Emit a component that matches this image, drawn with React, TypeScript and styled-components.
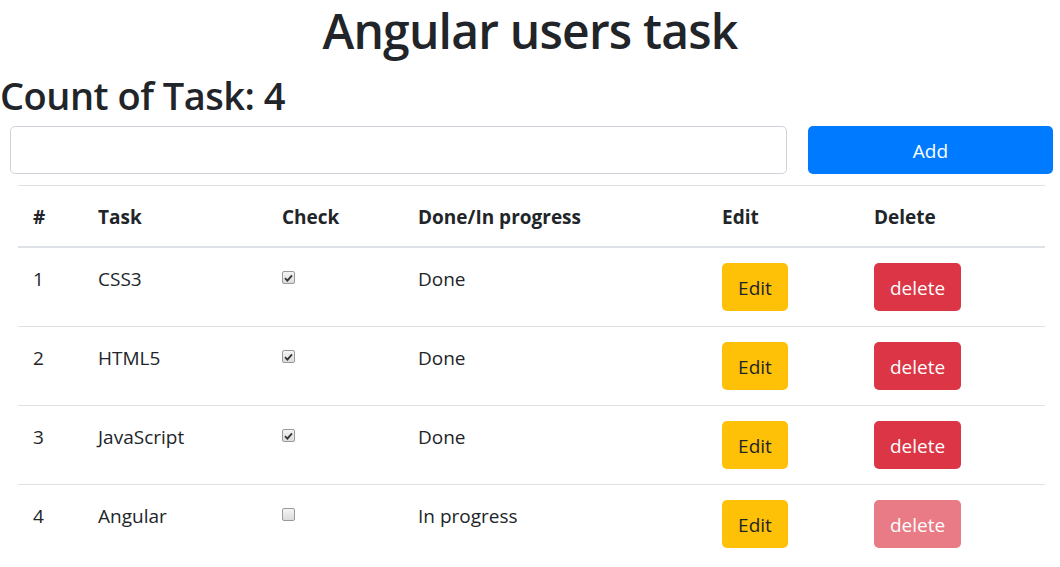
import React from "react";
import styled, { createGlobalStyle, css } from "styled-components";

const Global = createGlobalStyle`
  html, body { margin: 0; padding: 0; background: #fff; }
  body {
    font-family: "Open Sans", "Noto Sans", Arial, sans-serif;
    font-size: 20px;
    line-height: 30px;
    color: #212529;
  }
  * { box-sizing: border-box; }
`;

const Page = styled.div`
  width: 1060px;
  display: flex;
  flex-direction: column;
`;

const Title = styled.h1`
  margin: 0 0 10px;
  padding-top: 1px;
  font-size: 48px;
  font-weight: 600;
  line-height: 60px;
  text-align: center;
  letter-spacing: -0.8px;
`;

const Count = styled.h2`
  margin: 0 0 7px;
  font-size: 38px;
  font-weight: 600;
  line-height: 48px;
  letter-spacing: -0.5px;
`;

const FormRow = styled.div`
  display: flex;
  gap: 21px;
  padding: 0 7px 0 10px;
`;

const TextInput = styled.input`
  flex: 1;
  height: 48px;
  border: 1px solid #ced4da;
  border-radius: 5px;
  padding: 0 15px;
  font: inherit;
  outline: none;
`;

const Button = styled.button<{ $variant: "primary" | "warning" | "danger"; $disabled?: boolean }>`
  border: 1px solid transparent;
  border-radius: 5px;
  height: 48px;
  padding: 0 16px;
  font-family: inherit;
  font-size: 19px;
  line-height: 30px;
  cursor: pointer;
  ${(p) =>
    p.$variant === "primary" &&
    css`
      background: #007bff;
      color: #fff;
    `}
  ${(p) =>
    p.$variant === "warning" &&
    css`
      background: #ffc107;
      color: #212529;
    `}
  ${(p) =>
    p.$variant === "danger" &&
    css`
      background: #dc3545;
      color: #fff;
    `}
  ${(p) =>
    p.$disabled &&
    css`
      opacity: 0.65;
      cursor: default;
    `}
`;

const AddButton = styled(Button)`
  width: 245px;
  padding-top: 2px;
`;

const EditButton = styled(Button)`
  width: 66px;
  padding: 2px 0 0;
`;

const DeleteButton = styled(Button)`
  width: 87px;
  padding: 2px 0 0;
`;

const Table = styled.table`
  margin: 11px 15px 0 18px;
  width: 1027px;
  border-collapse: collapse;
  table-layout: fixed;
`;

const Th = styled.th`
  text-align: left;
  font-size: 19px;
  font-weight: 700;
  padding: 16px 15px 14px;
  border-top: 1px solid #dee2e6;
  border-bottom: 2px solid #dee2e6;
  vertical-align: bottom;
  line-height: 30px;
`;

const Td = styled.td`
  padding: 15px;
  border-top: 1px solid #dee2e6;
  vertical-align: top;
  font-size: 19px;
  line-height: 32px;
`;

const CheckBox = styled.span<{ $checked: boolean }>`
  display: inline-flex;
  align-items: center;
  justify-content: center;
  width: 13px;
  height: 13px;
  margin-top: 8px;
  border: 1px solid #9a9a9a;
  border-radius: 2px;
  background: linear-gradient(#f4f4f4, #dcdcdc);
  vertical-align: top;
`;

const tasks = [
  { id: 1, name: "CSS3", done: true },
  { id: 2, name: "HTML5", done: true },
  { id: 3, name: "JavaScript", done: true },
  { id: 4, name: "Angular", done: false },
];

const widths = [65, 184, 136, 304, 152, 186];

export default function App() {
  return (
    <Page>
      <Global />
      <Title>Angular users task</Title>
      <Count>Count of Task: {tasks.length}</Count>
      <FormRow>
        <TextInput type="text" />
        <AddButton $variant="primary">Add</AddButton>
      </FormRow>
      <Table>
        <colgroup>
          {widths.map((w, i) => (
            <col key={i} style={{ width: w }} />
          ))}
        </colgroup>
        <thead>
          <tr>
            <Th>#</Th>
            <Th>Task</Th>
            <Th>Check</Th>
            <Th>Done/In progress</Th>
            <Th>Edit</Th>
            <Th>Delete</Th>
          </tr>
        </thead>
        <tbody>
          {tasks.map((t) => (
            <tr key={t.id}>
              <Td>{t.id}</Td>
              <Td>{t.name}</Td>
              <Td>
                <CheckBox $checked={t.done} role="checkbox" aria-checked={t.done}>
                  {t.done && (
                    <svg width="9" height="8" viewBox="0 0 9 8">
                      <path d="M1 4.2 L3.4 6.6 L8 1.4" fill="none" stroke="#333" strokeWidth="1.8" />
                    </svg>
                  )}
                </CheckBox>
              </Td>
              <Td>{t.done ? "Done" : "In progress"}</Td>
              <Td>
                <EditButton $variant="warning">Edit</EditButton>
              </Td>
              <Td>
                <DeleteButton $variant="danger" $disabled={!t.done}>
                  delete
                </DeleteButton>
              </Td>
            </tr>
          ))}
        </tbody>
      </Table>
    </Page>
  );
}
